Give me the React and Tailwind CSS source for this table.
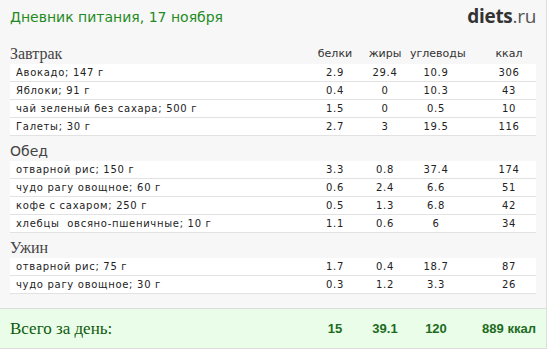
import React from 'react';

const meals = [
  {
    name: 'Завтрак',
    font: 'serif',
    items: [
      ['Авокадо; 147 г', '2.9', '29.4', '10.9', '306'],
      ['Яблоки; 91 г', '0.4', '0', '10.3', '43'],
      ['чай зеленый без сахара; 500 г', '1.5', '0', '0.5', '10'],
      ['Галеты; 30 г', '2.7', '3', '19.5', '116'],
    ],
  },
  {
    name: 'Обед',
    font: 'sans',
    items: [
      ['отварной рис; 150 г', '3.3', '0.8', '37.4', '174'],
      ['чудо рагу овощное; 60 г', '0.6', '2.4', '6.6', '51'],
      ['кофе с сахаром; 250 г', '0.5', '1.3', '6.8', '42'],
      ['хлебцы  овсяно-пшеничные; 10 г', '1.1', '0.6', '6', '34'],
    ],
  },
  {
    name: 'Ужин',
    font: 'serif',
    items: [
      ['отварной рис; 75 г', '1.7', '0.4', '18.7', '87'],
      ['чудо рагу овощное; 30 г', '0.3', '1.2', '3.3', '26'],
    ],
  },
];

const Cols = ({ b, j, u, k, className = '' }) => (
  <>
    <div className={`w-[50px] shrink-0 text-center ${className}`}>{b}</div>
    <div className={`w-[50px] shrink-0 text-center ${className}`}>{j}</div>
    <div className={`w-[52px] shrink-0 text-center ${className}`}>{u}</div>
    <div className={`w-[74px] shrink-0 pl-[20px] text-center ${className}`}>{k}</div>
  </>
);

const Meal = ({ meal, first }) => (
  <div className={first ? '' : 'mt-[5px]'}>
    <div className="flex h-[20px] items-center pl-[10px] pr-[10px]">
      <div
        className={`flex-1 text-[#444] ${
          meal.font === 'serif' ? "font-['Liberation_Serif',serif] text-[16px]" : "font-['DejaVu_Sans',sans-serif] text-[14px]"
        }`}
      >
        {meal.name}
      </div>
      {first && (
        <div className="flex text-[11px] text-[#333]">
          <Cols b="белки" j="жиры" u="углеводы" k="ккал" />
        </div>
      )}
    </div>
    <div className="ml-[10px] mr-[10px]">
      {meal.items.map((it, i) => (
        <div
          key={i}
          className="flex h-[18px] items-center border-b border-[#e2e2e2] bg-white text-[10px] tracking-[0.7px] text-[#222]"
        >
          <div className="flex-1 whitespace-pre pl-[6px]">{it[0]}</div>
          <Cols b={it[1]} j={it[2]} u={it[3]} k={it[4]} />
        </div>
      ))}
    </div>
  </div>
);

export default function App() {
  return (
    <div className="h-[350px] w-[550px] bg-white font-['DejaVu_Sans',sans-serif]">
      <div className="flex h-[349px] w-[547px] flex-col border-b border-r border-[#dedede] bg-[#f7f7f7]">
        <div className="flex h-[44px] items-start justify-between pl-[10px] pr-[10px]">
          <div className="mt-[7px] text-[14px] text-[#1f8b24]">Дневник питания, 17 ноября</div>
          <div className="mt-[2px] font-['Open_Sans',sans-serif] text-[19px] tracking-[-0.3px] text-[#333]">
            <span className="font-bold">diets</span>
            <span className="text-[#555]">.ru</span>
          </div>
        </div>
        {meals.map((m, i) => (
          <Meal key={m.name} meal={m} first={i === 0} />
        ))}
        <div className="mt-auto flex h-[40px] items-center border-t border-[#dcdcdc] bg-[#e9fde9] pl-[10px] pr-[10px]">
          <div className="flex-1 font-['Liberation_Serif',serif] text-[17px] text-[#0b5a0b]">Всего за день:</div>
          <div className="flex font-['Liberation_Sans',sans-serif] text-[13px] font-bold text-[#1e6b1e]">
            <div className="w-[50px] text-center">15</div>
            <div className="w-[50px] text-center">39.1</div>
            <div className="w-[52px] text-center">120</div>
            <div className="w-[74px] whitespace-nowrap pl-[20px] text-center">889 ккал</div>
          </div>
        </div>
      </div>
    </div>
  );
}
